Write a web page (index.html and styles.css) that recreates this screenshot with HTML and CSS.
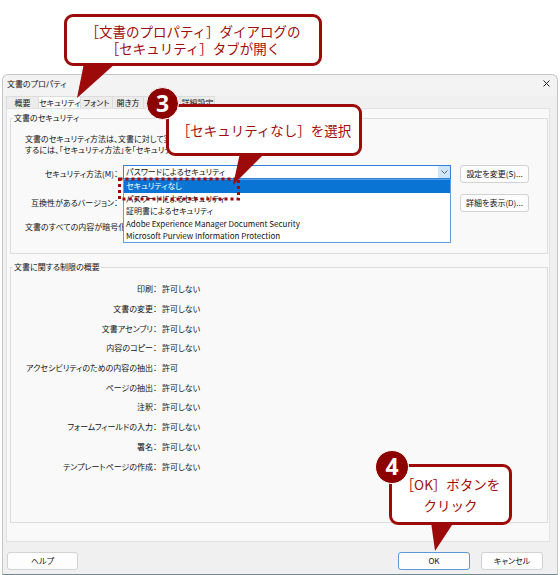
FILE: index.html
```html
<!DOCTYPE html>
<html lang="ja">
<head>
<meta charset="utf-8">
<title>文書のプロパティ</title>
<link rel="stylesheet" href="styles.css">
</head>
<body>
<div class="top-space"></div>
<div class="window">
  <div class="titlebar">
    <span class="title">文書のプロパティ</span>
    <svg class="close" width="7" height="7" viewBox="0 0 7 7"><path d="M0.5 0.5L6.5 6.5M6.5 0.5L0.5 6.5" stroke="#222" stroke-width="1"/></svg>
  </div>
  <div class="tabs">
    <div class="tab w32">概要</div>
    <div class="tab active w42">セキュリティ</div>
    <div class="tab w32">フォント</div>
    <div class="tab w31">開き方</div>
    <div class="tab w37">カスタム</div>
    <div class="tab w34">詳細設定</div>
  </div>
  <div class="panel">
    <div class="group group-security">
      <div class="group-title">文書のセキュリティ</div>
      <p class="desc">文書のセキュリティ方法は、文書に対して実行できる操作を制限します。セキュリティ制限を解除<br>するには、「セキュリティ方法」を「セキュリティなし」に設定してください。</p>
      <div class="form">
        <span class="label">セキュリティ方法(M)：</span>
        <div class="combo">
          <span class="combo-value">パスワードによるセキュリティ</span>
          <span class="combo-arrow"><svg width="7" height="4" viewBox="0 0 7 4"><path d="M0.5 0.5L3.5 3.5L6.5 0.5" fill="none" stroke="#555" stroke-width="0.9"/></svg></span>
          <ul class="dropdown">
            <li class="selected">セキュリティなし</li>
            <li>パスワードによるセキュリティ</li>
            <li>証明書によるセキュリティ</li>
            <li>Adobe Experience Manager Document Security</li>
            <li>Microsoft Purview Information Protection</li>
          </ul>
        </div>
        <button class="btn">設定を変更(S)...</button>
        <span class="label">互換性があるバージョン：</span>
        <div class="combo"><span class="combo-value">Acrobat 7.0 以降</span></div>
        <button class="btn">詳細を表示(D)...</button>
      </div>
      <p class="enc">文書のすべての内容が暗号化されます。検索エンジンは文書のメタデータにアクセスできません。</p>
    </div>
    <div class="group group-summary">
      <div class="group-title">文書に関する制限の概要</div>
      <dl class="summary">
        <dt>印刷：</dt><dd>許可しない</dd>
        <dt>文書の変更：</dt><dd>許可しない</dd>
        <dt>文書アセンブリ：</dt><dd>許可しない</dd>
        <dt>内容のコピー：</dt><dd>許可しない</dd>
        <dt>アクセシビリティのための内容の抽出：</dt><dd>許可</dd>
        <dt>ページの抽出：</dt><dd>許可しない</dd>
        <dt>注釈：</dt><dd>許可しない</dd>
        <dt>フォームフィールドの入力：</dt><dd>許可しない</dd>
        <dt>署名：</dt><dd>許可しない</dd>
        <dt>テンプレートページの作成：</dt><dd>許可しない</dd>
      </dl>
    </div>
  </div>
  <div class="footer">
    <button class="btn help">ヘルプ</button>
    <button class="btn ok">OK</button>
    <button class="btn cancel">キャンセル</button>
  </div>
</div>

<div class="callout c1"><span>［文書のプロパティ］ダイアログの</span><span>［セキュリティ］タブが開く</span></div>
<div class="callout c3"><span>［セキュリティなし］を選択</span></div>
<div class="callout c4"><span>［OK］ボタンを</span><span>クリック</span></div>

<svg class="marks" width="560" height="575" viewBox="0 0 560 575">
  <polygon points="84,63 116,63 77,98" fill="#9c0a0a"/>
  <polygon points="240,153 265,153 233,185" fill="#9c0a0a"/>
  <polygon points="431,522 454,522 435,551" fill="#9c0a0a"/>
  <rect x="119.5" y="179" width="119" height="20" fill="none" stroke="#9c0a0a" stroke-width="3" stroke-dasharray="3 3"/>
</svg>

<div class="badge b3">3</div>
<div class="badge b4">4</div>
</body>
</html>
```

FILE: styles.css
```css
* { box-sizing: border-box; }
html, body { margin: 0; padding: 0; }
body {
  width: 560px;
  height: 575px;
  overflow: hidden;
  background: #fff;
  position: relative;
  font-family: "Noto Sans CJK JP", "Noto Sans", sans-serif;
}
.top-space { height: 74px; }

.window {
  margin-left: 2px;
  width: 556px;
  height: 501px;
  border: 1px solid #c6c6c6;
  border-bottom-color: #6e8a8e;
  border-radius: 6px 6px 0 0;
  background: #f0f0f0;
  font-size: 8px;
  color: #111;
  font-feature-settings: "palt";
  display: flex;
  flex-direction: column;
}
.titlebar {
  height: 21px;
  display: flex;
  justify-content: space-between;
  align-items: flex-start;
  padding: 4px 7px 0 4px;
  line-height: 10px;
  background: #f3f3f3;
  border-radius: 6px 6px 0 0;
}
.close { margin-top: 1px; }

.tabs {
  height: 12px;
  display: flex;
  margin-left: 3px;
}
.tab {
  height: 12px;
  line-height: 11px;
  text-align: center;
  border: 1px solid #dcdcdc;
  border-bottom: none;
  margin-right: -1px;
  background: #ececec;
  white-space: nowrap;
  overflow: hidden;
}
.tab.active { background: #fbfbfb; position: relative; z-index: 1; }
.w31 { width: 32px; }
.w32 { width: 33px; }
.w34 { width: 35px; }
.w37 { width: 38px; }
.w42 { width: 43px; }

.panel {
  margin-left: 3px;
  width: 544px;
  height: 434px;
  background: #f9f9f9;
  border: 1px solid #e2e2e2;
  padding: 9px 0 0 3px;
}
.group {
  width: 538px;
  border: 1px solid #dcdcdc;
}
.group-security { height: 136px; }
.group-summary { height: 256px; margin-top: 13px; }
.group-title {
  margin: -6px 0 0 2px;
  padding: 0 1px;
  width: fit-content;
  line-height: 10px;
  background: #f9f9f9;
}
.desc {
  margin: 10px 0 0 14px;
  line-height: 11px;
  white-space: nowrap;
}
.form {
  margin: 10px 0 0 14px;
  display: grid;
  grid-template-columns: 93px 328px 73px;
  grid-auto-rows: 18px;
  column-gap: 5px;
  row-gap: 11px;
  align-items: center;
}
.form .btn { margin-left: 4px; }
.label { text-align: right; white-space: nowrap; line-height: 10px; }
.combo {
  position: relative;
  align-self: start;
  height: 14px;
  background: #fff;
  border: 1px solid #2f82d9;
  display: flex;
  align-items: center;
  justify-content: space-between;
  padding-left: 2px;
  line-height: 10px;
}
.combo-arrow {
  width: 12px;
  height: 12px;
  background: #cfe5f8;
  display: flex;
  align-items: center;
  justify-content: center;
}
.dropdown {
  position: absolute;
  left: -1px;
  top: 13px;
  width: 328px;
  height: 64px;
  margin: 0;
  padding: 0;
  list-style: none;
  background: #fff;
  border: 1px solid #5d9fe4;
  z-index: 2;
}
.dropdown li {
  height: 12.6px;
  line-height: 12.6px;
  padding-left: 2px;
  white-space: nowrap;
}
.dropdown li.selected { background: #0a74d4; color: #fff; }
.enc {
  margin: 9px 0 0 14px;
  line-height: 11px;
  white-space: nowrap;
}

.summary {
  margin: 7px 0 0 0;
  display: grid;
  grid-template-columns: 146px auto;
  grid-auto-rows: 19.7px;
  column-gap: 5px;
  align-items: center;
}
.summary dt { text-align: right; white-space: nowrap; }
.summary dd { margin: 0; }

.btn {
  height: 18px;
  padding: 0;
  background: #fdfdfd;
  border: 1px solid #d2d2d2;
  border-radius: 3px;
  font-family: "Noto Sans CJK JP", "Noto Sans", sans-serif;
  font-size: 8px;
  font-feature-settings: "palt";
  color: #111;
  line-height: 10px;
}
.footer {
  display: flex;
  padding-top: 10px;
}
.help { width: 71px; margin-left: 4px; }
.ok { width: 72px; margin-left: auto; border-color: #5b9ad6; }
.cancel { width: 62px; margin-left: 11px; margin-right: 14px; }

.callout {
  position: absolute;
  z-index: 5;
  background: #fff;
  border: 3px solid #9c0a0a;
  border-radius: 9px;
  color: #a00c0c;
  font-size: 13.5px;
  font-weight: 400;
  line-height: 17px;
  display: flex;
  flex-direction: column;
  align-items: center;
  justify-content: center;
  white-space: nowrap;
}
.c1 { left: 64px; top: 14px; width: 258px; height: 52px; }
.c3 { left: 166px; top: 104px; width: 196px; height: 52px; }
.c4 { left: 389px; top: 464px; width: 123px; height: 61px; line-height: 21px; }

.marks {
  position: absolute;
  left: 0;
  top: 0;
  z-index: 6;
  pointer-events: none;
}
.badge {
  position: absolute;
  z-index: 7;
  width: 34px;
  height: 34px;
  border-radius: 50%;
  background: #8c0000;
  border: 1.5px solid #fff;
  color: #fff;
  font-family: "Noto Sans", "DejaVu Sans", sans-serif;
  font-weight: 700;
  font-size: 23px;
  line-height: 31px;
  text-align: center;
}
.b3 { left: 146px; top: 87px; width: 33px; height: 33px; line-height: 30px; }
.b4 { left: 375px; top: 450px; }
```
